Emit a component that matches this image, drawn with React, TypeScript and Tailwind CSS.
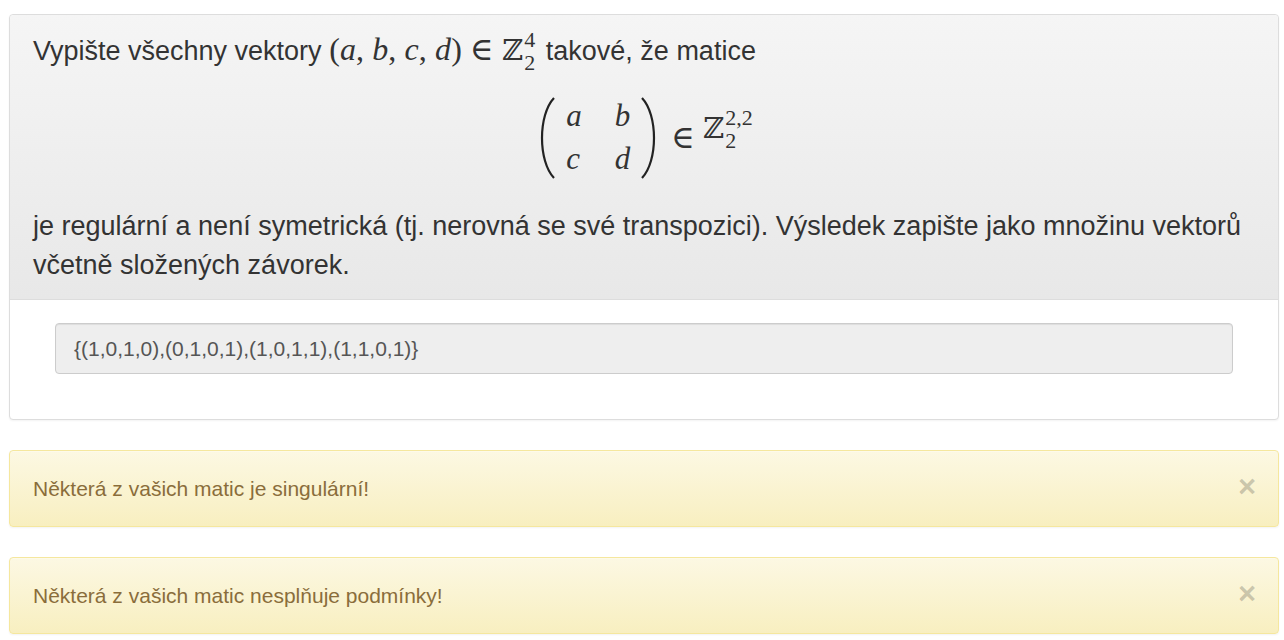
import React from 'react';

const sans = { fontFamily: '"Liberation Sans", Arial, sans-serif' };
const serif = { fontFamily: '"Liberation Serif", "DejaVu Serif", serif' };

// tall parenthesis drawn as a stroke, used around the matrix
function Paren({ right = false }: { right?: boolean }) {
  return (
    <svg width="17" height="82" viewBox="0 0 17 82" className="block">
      <path
        d={right ? 'M2 1 C 18 18, 18 64, 2 81' : 'M15 1 C -1 18, -1 64, 15 81'}
        fill="none"
        stroke="#222"
        strokeWidth="2.2"
      />
    </svg>
  );
}

function Zset({ sup, sub }: { sup: string; sub: string }) {
  return (
    <span className="inline-flex items-start">
      <span style={{ fontFamily: '"DejaVu Serif", serif' }} className="text-[29px]">ℤ</span>
      <span className="inline-flex flex-col leading-none text-[22px] ml-[1px]">
        <span className="-mt-[2px]">{sup}</span>
        <span className="mt-[1px]">{sub}</span>
      </span>
    </span>
  );
}

function Alert({ text }: { text: string }) {
  return (
    <div className="flex items-center justify-between h-[77px] pl-[23px] pr-[22px] rounded-[4px] border border-[#f5e79e] bg-gradient-to-b from-[#fcf8e3] to-[#f8efc0] shadow-[inset_0_1px_0_rgba(255,255,255,0.25),0_1px_2px_rgba(0,0,0,0.05)]">
      <span className="text-[21px] text-[#8a6d3b]">{text}</span>
      <span className="text-[31px] font-bold leading-none text-black/20 mt-[-4px]">×</span>
    </div>
  );
}

export default function App() {
  return (
    <div className="min-h-screen bg-white pt-[14px] pl-[9px] pr-[5px] text-[#333]" style={sans}>
      <div className="rounded-[4px] border border-[#ddd] bg-white shadow-[0_1px_2px_rgba(0,0,0,0.05)]">
        <div className="rounded-t-[4px] border-b border-[#ddd] bg-gradient-to-b from-[#f5f5f5] to-[#e8e8e8] px-[23px] pt-[15px] pb-[15px] text-[27px] leading-[38.6px]">
          <p>
            Vypište všechny vektory{' '}
            <span style={serif} className="text-[32px] tracking-[0.1px] mr-[3px]">
              (<i>a</i>, <i>b</i>, <i>c</i>, <i>d</i>) ∈ <Zset sup="4" sub="2" />
            </span>{' '}
            takové, že matice
          </p>
          <div className="h-[133px] flex items-center justify-center" style={serif}>
            <div className="flex items-center ml-[4px] mt-[-6px]">
              <Paren />
              <div className="grid grid-cols-[auto_auto] gap-x-[33px] gap-y-[9px] px-[10px] text-[31px] leading-[34px] italic">
                <span>a</span>
                <span>b</span>
                <span>c</span>
                <span>d</span>
              </div>
              <Paren right />
              <span className="text-[32px] ml-[14px] mr-[8px]">∈</span>
              <span className="mt-[-14px]">
                <Zset sup="2,2" sub="2" />
              </span>
            </div>
          </div>
          <p>
            je regulární a není symetrická (tj. nerovná se své transpozici). Výsledek zapište jako množinu vektorů včetně složených závorek.
          </p>
        </div>
        <div className="px-[45px] pt-[23px] pb-[45px]">
          <div className="h-[51px] flex items-center rounded-[4px] border border-[#ccc] bg-[#eee] px-[18px] text-[21px] text-[#555] shadow-[inset_0_1px_1px_rgba(0,0,0,0.075)]">
            {'{(1,0,1,0),(0,1,0,1),(1,0,1,1),(1,1,0,1)}'}
          </div>
        </div>
      </div>
      <div className="mt-[30px] flex flex-col gap-[30px]">
        <Alert text="Některá z vašich matic je singulární!" />
        <Alert text="Některá z vašich matic nesplňuje podmínky!" />
      </div>
    </div>
  );
}
